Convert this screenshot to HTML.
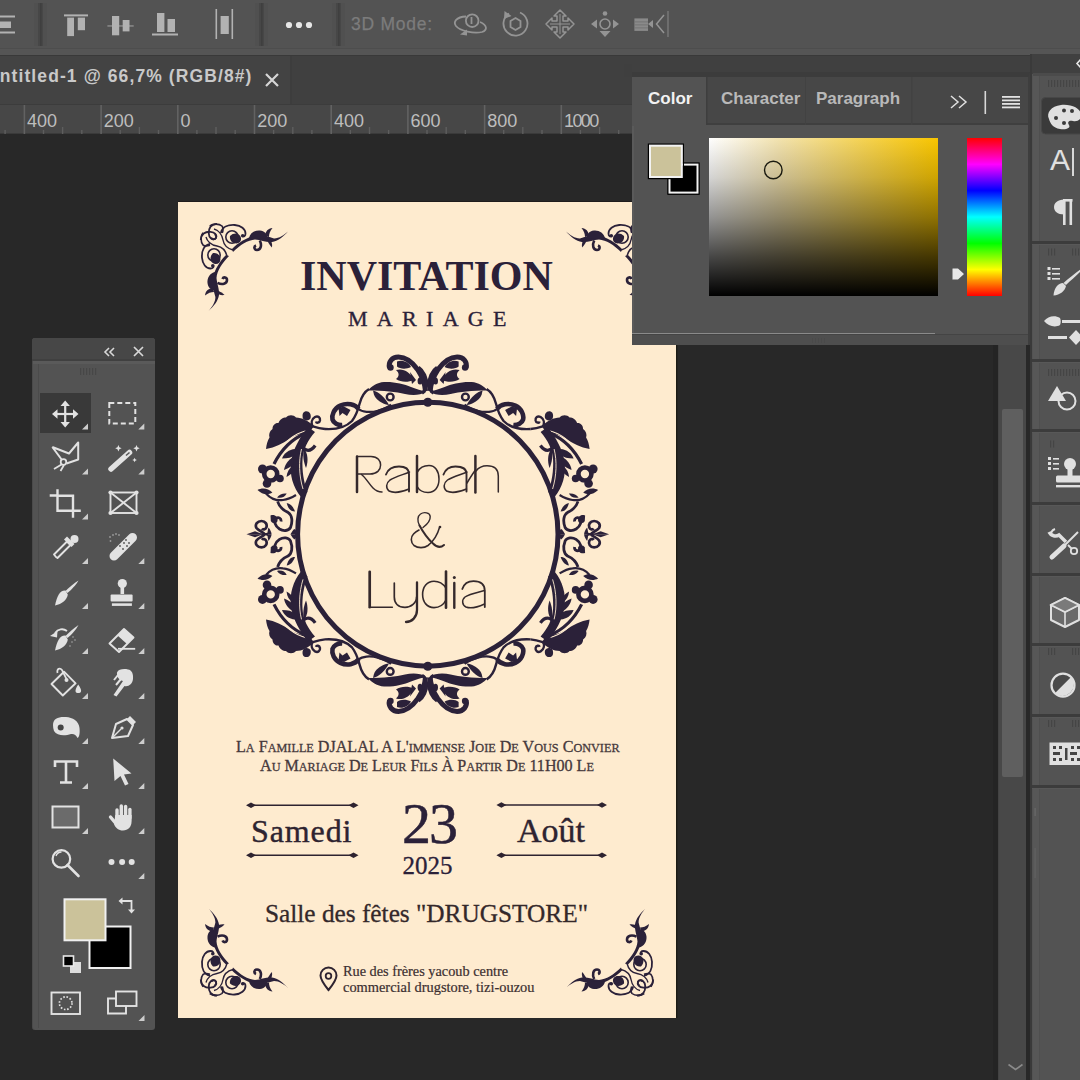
<!DOCTYPE html>
<html><head><meta charset="utf-8">
<style>
*{margin:0;padding:0;box-sizing:border-box}
html,body{width:1080px;height:1080px;overflow:hidden;background:#282828;font-family:"Liberation Sans",sans-serif}
.a{position:absolute}
svg{position:absolute;overflow:visible}
#top{left:0;top:0;width:1080px;height:48px;background:#535353}
#tl1{left:0;top:48px;width:1080px;height:1px;background:#4d4d4d}
#tl2{left:0;top:49px;width:1080px;height:6px;background:#555555}
#tl3{left:0;top:55px;width:1080px;height:1px;background:#393939}
#tabs{left:0;top:56px;width:1080px;height:48px;background:#404040}
#tab1{left:0;top:56px;width:292px;height:48px;background:#434343;border-right:2px solid #3d3d3d}
#tabtxt{left:-14px;top:66px;font-size:17.5px;font-weight:bold;color:#c9c9c9;white-space:nowrap;letter-spacing:1.1px}
#ruler{left:0;top:104px;width:1080px;height:30px;background:#474747;border-top:1px solid #3c3c3c;border-bottom:1px solid #3a3a3a}
.rn{position:absolute;top:110.5px;font-size:18px;color:#bdbdbd;white-space:nowrap}
.rt{position:absolute;top:105px;width:1px;height:29px;background:#6a6a6a}
#card{left:178px;top:202px;width:498px;height:816px;background:#feebcf;box-shadow:0 -1px 0 #1f1c1c,1px 0 0 #1c1b14,2px 0 0 #232320}
#canvasline{left:993px;top:134px;width:5px;height:946px;background:#242424}
#scroll{left:998px;top:345px;width:28px;height:735px;background:#484848;border-left:1px solid #424242}
#thumb{left:1002px;top:409px;width:21px;height:368px;background:#5f5f5f;border-radius:2px}
#dock{left:1030px;top:54px;width:50px;height:1026px;background:#535353;border-left:2px solid #3a3a3a}
#dockh{left:1032px;top:54px;width:48px;height:20px;background:#404040}
.dsep{position:absolute;left:1032px;width:48px;height:2px;background:#434343}
#tools{left:32px;top:338px;width:123px;height:692px;background:#535353;border-radius:3px;border-left:1px solid #4a4a4a}
#toolsh{left:32px;top:338px;width:123px;height:23px;background:#474747;border-radius:3px 3px 0 0;border-bottom:2px solid #404040}
#color{left:632px;top:72px;width:398px;height:273px;background:#535353;border-top:5px solid #3c3c3c;border-right:2px solid #3e3e3e}
#ctabs{left:632px;top:77px;width:396px;height:48px;background:#474747;border-bottom:2px solid #3f3f3f}
#ctab1{left:632px;top:77px;width:74px;height:49px;background:#535353}
.ctt{position:absolute;top:89px;font-size:17px;font-weight:bold;white-space:nowrap}
#field{left:709px;top:138px;width:229px;height:158px;background:linear-gradient(to bottom,rgba(0,0,0,0) 0%,rgba(0,0,0,0.17) 25%,rgba(0,0,0,0.42) 50%,rgba(0,0,0,0.72) 75%,#000 100%),linear-gradient(to right,#fff 0%,#f3e3b0 30%,#f8c500 100%)}
#hue{left:967px;top:138px;width:35px;height:158px;background:linear-gradient(to bottom,#f00 0%,#f0f 16.7%,#00f 33.3%,#0ff 50%,#0f0 66.7%,#ff0 83.3%,#f00 100%)}
#cbot1{left:632px;top:333px;width:303px;height:1px;background:#8a8a8a}
#cbot2{left:632px;top:334px;width:396px;height:11px;background:#4e4e4e;border-top:1px solid #444}
</style></head><body>
<div class="a" id="top"></div>



<!--TB--><svg style="left:0;top:0" width="1080" height="50"><rect x="0" y="15.5" width="15" height="2" fill="#b2b2b2"/><rect x="0" y="31.5" width="15" height="2" fill="#b2b2b2"/><rect x="0" y="21.5" width="11" height="6.5" fill="#b2b2b2"/><rect x="34" y="3" width="13" height="43" fill="#505050"/><rect x="38" y="3" width="5" height="43" fill="#474747"/><rect x="40" y="3" width="1.5" height="43" fill="#3f3f3f"/><rect x="255" y="3" width="13" height="43" fill="#505050"/><rect x="259" y="3" width="5" height="43" fill="#474747"/><rect x="261" y="3" width="1.5" height="43" fill="#3f3f3f"/><rect x="332" y="3" width="13" height="43" fill="#505050"/><rect x="336" y="3" width="5" height="43" fill="#474747"/><rect x="338" y="3" width="1.5" height="43" fill="#3f3f3f"/><rect x="64" y="14.4" width="24" height="2" fill="#b2b2b2"/><rect x="67.2" y="17.6" width="6.8" height="18.5" fill="#b2b2b2"/><rect x="77.8" y="17.6" width="7.2" height="12.6" fill="#b2b2b2"/><rect x="107.4" y="25.2" width="26.3" height="1.5" fill="#8a8a8a"/><rect x="112" y="16" width="7.2" height="19.3" fill="#b2b2b2"/><rect x="122.7" y="20" width="6.8" height="11.4" fill="#b2b2b2"/><rect x="157" y="13" width="7.4" height="19" fill="#b2b2b2"/><rect x="167.5" y="19" width="7.5" height="13" fill="#b2b2b2"/><rect x="152" y="33.5" width="26" height="2" fill="#b2b2b2"/><rect x="215.5" y="9" width="1.6" height="30" fill="#b2b2b2"/><rect x="231.5" y="9" width="1.6" height="30" fill="#b2b2b2"/><rect x="220.6" y="16" width="8.2" height="18" fill="#b2b2b2"/><circle cx="289" cy="25" r="3.1" fill="#e6e6e6"/><circle cx="299" cy="25" r="3.1" fill="#e6e6e6"/><circle cx="309" cy="25" r="3.1" fill="#e6e6e6"/><g fill="none" stroke="#949494" stroke-width="1.8"><circle cx="472.2" cy="20.7" r="6.3"/><path d="M466 16.5 C456 17 453 22 456 26 C460 31 474 34 482 32 C488 30 487 25 480 22"/><line x1="471.5" y1="17" x2="471.5" y2="24"/></g><path d="M460 34.5 L467 29.5 L467 35.5 Z" fill="#949494"/><g fill="none" stroke="#949494" stroke-width="1.8"><path d="M509 13.5 A12 12 0 1 0 520 12.5"/><polygon points="515.5,18 520.5,21 520.5,27 515.5,30 510.5,27 510.5,21"/></g><path d="M504.5 11 L511.5 16 L504 19 Z" fill="#949494"/><g fill="none" stroke="#949494" stroke-width="1.5" stroke-linejoin="round"><path d="M560 10 L566 16 L563 16 L563 21 L568 21 L568 18 L574 24 L568 30 L568 27 L563 27 L563 32 L566 32 L560 38 L554 32 L557 32 L557 27 L552 27 L552 30 L546 24 L552 18 L552 21 L557 21 L557 16 L554 16 Z"/></g><line x1="560" y1="14" x2="560" y2="34" stroke="#949494" stroke-width="1"/><line x1="550" y1="24" x2="570" y2="24" stroke="#949494" stroke-width="1"/><g fill="none" stroke="#949494" stroke-width="1.6"><circle cx="605" cy="24" r="5"/></g><circle cx="605" cy="13.5" r="2.3" fill="#949494"/><path d="M591 24 L597 19.5 L597 28.5 Z M619 24 L613 19.5 L613 28.5 Z M599.5 31 L610.5 31 L605 37 Z" fill="#949494"/><rect x="634.4" y="18.4" width="13.6" height="12.5" fill="#949494" opacity="0.85"/><g fill="#6e6e6e"><rect x="634.4" y="21.5" width="13.6" height="0.8"/><rect x="634.4" y="24.5" width="13.6" height="0.8"/><rect x="634.4" y="27.5" width="13.6" height="0.8"/></g><path d="M648 24 L653 20 L653 28 Z" fill="#949494"/><path d="M664 15 L656.5 24 L664 33" fill="none" stroke="#949494" stroke-width="1.5"/><line x1="668" y1="11" x2="668" y2="37" stroke="#808080" stroke-width="1.2"/></svg><div class="a" style="left:351px;top:14px;font-size:17.5px;color:#7c7c7c;white-space:nowrap;letter-spacing:0.75px;-webkit-text-stroke:0.25px #7c7c7c">3D Mode:</div><!--/TB-->
<div class="a" id="tl1"></div><div class="a" id="tl2"></div><div class="a" id="tl3"></div>
<div class="a" id="tabs"></div><div class="a" id="tab1"></div>
<div class="a" id="tabtxt">Untitled-1 @ 66,7% (RGB/8#)</div>
<div class="a" id="ruler"></div>


<!--RU--><svg style="left:0;top:104px" width="632" height="31"><rect x="-53.1" y="1" width="1.6" height="29" fill="#626262"/><rect x="-33.9" y="26" width="1.4" height="4" fill="#5e5e5e"/><rect x="-14.8" y="23" width="1.4" height="7" fill="#5e5e5e"/><rect x="4.4" y="26" width="1.4" height="4" fill="#5e5e5e"/><rect x="23.6" y="1" width="1.6" height="29" fill="#626262"/><rect x="42.8" y="26" width="1.4" height="4" fill="#5e5e5e"/><rect x="61.9" y="23" width="1.4" height="7" fill="#5e5e5e"/><rect x="81.1" y="26" width="1.4" height="4" fill="#5e5e5e"/><rect x="100.3" y="1" width="1.6" height="29" fill="#626262"/><rect x="119.5" y="26" width="1.4" height="4" fill="#5e5e5e"/><rect x="138.7" y="23" width="1.4" height="7" fill="#5e5e5e"/><rect x="157.8" y="26" width="1.4" height="4" fill="#5e5e5e"/><rect x="177.0" y="1" width="1.6" height="29" fill="#626262"/><rect x="196.2" y="26" width="1.4" height="4" fill="#5e5e5e"/><rect x="215.3" y="23" width="1.4" height="7" fill="#5e5e5e"/><rect x="234.5" y="26" width="1.4" height="4" fill="#5e5e5e"/><rect x="253.7" y="1" width="1.6" height="29" fill="#626262"/><rect x="272.9" y="26" width="1.4" height="4" fill="#5e5e5e"/><rect x="292.1" y="23" width="1.4" height="7" fill="#5e5e5e"/><rect x="311.2" y="26" width="1.4" height="4" fill="#5e5e5e"/><rect x="330.4" y="1" width="1.6" height="29" fill="#626262"/><rect x="349.6" y="26" width="1.4" height="4" fill="#5e5e5e"/><rect x="368.8" y="23" width="1.4" height="7" fill="#5e5e5e"/><rect x="387.9" y="26" width="1.4" height="4" fill="#5e5e5e"/><rect x="407.1" y="1" width="1.6" height="29" fill="#626262"/><rect x="426.3" y="26" width="1.4" height="4" fill="#5e5e5e"/><rect x="445.5" y="23" width="1.4" height="7" fill="#5e5e5e"/><rect x="464.6" y="26" width="1.4" height="4" fill="#5e5e5e"/><rect x="483.8" y="1" width="1.6" height="29" fill="#626262"/><rect x="503.0" y="26" width="1.4" height="4" fill="#5e5e5e"/><rect x="522.1" y="23" width="1.4" height="7" fill="#5e5e5e"/><rect x="541.3" y="26" width="1.4" height="4" fill="#5e5e5e"/><rect x="560.5" y="1" width="1.6" height="29" fill="#626262"/><rect x="579.7" y="26" width="1.4" height="4" fill="#5e5e5e"/><rect x="598.9" y="23" width="1.4" height="7" fill="#5e5e5e"/><rect x="618.0" y="26" width="1.4" height="4" fill="#5e5e5e"/><rect x="637.2" y="1" width="1.6" height="29" fill="#626262"/><rect x="656.4" y="26" width="1.4" height="4" fill="#5e5e5e"/><rect x="675.6" y="23" width="1.4" height="7" fill="#5e5e5e"/><rect x="694.7" y="26" width="1.4" height="4" fill="#5e5e5e"/></svg><div class="rn" style="left:27.1px">400</div><div class="rn" style="left:103.8px">200</div><div class="rn" style="left:180.5px">0</div><div class="rn" style="left:257.2px">200</div><div class="rn" style="left:333.9px">400</div><div class="rn" style="left:410.6px">600</div><div class="rn" style="left:487.3px">800</div><div class="rn" style="left:564.0px;letter-spacing:-1.6px">1000</div><div class="a" id="tabx" style="left:264px;top:72px;width:16px;height:16px"><svg width="16" height="16" style="left:0;top:0"><path d="M2 2 L14 14 M14 2 L2 14" stroke="#d6d6d6" stroke-width="2.2"/></svg></div><!--/RU-->
<div class="a" id="card"></div>


<!--CORN--><svg style="left:0;top:0" width="1080" height="1080"><g transform=""><g>
<path d="M232 249 C238 243 246 238 255 235.6 C262 234.5 268 237 274 238.4 C279 238.5 284 235 288 231.5 C283 237 278 241 272 242 C266 242.5 261 240 255 239.5 C248 240 240 245 233 252 Z" fill="#2b2139"/>
<path d="M249 238 C250 233 255 230 260 230.5 C265 231 268 235 267 239 C262 238 256 238 249 238 Z" fill="#2b2139"/>
<path d="M259.8 240.5 C262 245 261 250 257 250 C254 250 253.5 246.5 256 245.5" fill="none" stroke="#2b2139" stroke-width="2.6"/>
<path d="M265 236 C265.5 231 268 228.5 272.5 228 C270 231 269 234 269 237 Z" fill="#2b2139"/>
<path d="M267 240 C268.5 243 270 245.5 272 247.5 C272.5 244 271.5 241.5 270.5 239.5 Z" fill="#2b2139"/>
<path d="M220.9 233 C222 227 228 224.6 234.8 225 C241 225.5 245.5 229 245.5 233.5 C245.5 236 244 237 242.5 236" fill="none" stroke="#2b2139" stroke-width="1.8"/>
<circle cx="242.7" cy="235.8" r="1.8" fill="#2b2139"/>
<circle cx="232" cy="237" r="6.2" fill="none" stroke="#2b2139" stroke-width="1.6"/>
<path d="M230 236 C234 232 240 233 241 238 C241.5 242 238 244.5 234 243 C231 242 229.5 239 230 236 Z" fill="#2b2139"/>
<path d="M200.8 240 C201 234 205 231.5 210.5 231.8 C215 232 217 235 216 238 C214.5 240 211.5 239.5 211.5 237.5" fill="none" stroke="#2b2139" stroke-width="1.8"/>
<path d="M209.8 226 C213 223.5 219 223.5 222 226 C223.5 228 223 231 222.3 233" fill="none" stroke="#2b2139" stroke-width="1.6"/>
<path d="M214 229 C218 230 222 234 223 240 C224 246 229 249 233 250" fill="none" stroke="#2b2139" stroke-width="1.4"/>
</g><g transform="matrix(0,1,1,0,-23,23)">
<path d="M232 249 C238 243 246 238 255 235.6 C262 234.5 268 237 274 238.4 C279 238.5 284 235 288 231.5 C283 237 278 241 272 242 C266 242.5 261 240 255 239.5 C248 240 240 245 233 252 Z" fill="#2b2139"/>
<path d="M249 238 C250 233 255 230 260 230.5 C265 231 268 235 267 239 C262 238 256 238 249 238 Z" fill="#2b2139"/>
<path d="M259.8 240.5 C262 245 261 250 257 250 C254 250 253.5 246.5 256 245.5" fill="none" stroke="#2b2139" stroke-width="2.6"/>
<path d="M265 236 C265.5 231 268 228.5 272.5 228 C270 231 269 234 269 237 Z" fill="#2b2139"/>
<path d="M267 240 C268.5 243 270 245.5 272 247.5 C272.5 244 271.5 241.5 270.5 239.5 Z" fill="#2b2139"/>
<path d="M220.9 233 C222 227 228 224.6 234.8 225 C241 225.5 245.5 229 245.5 233.5 C245.5 236 244 237 242.5 236" fill="none" stroke="#2b2139" stroke-width="1.8"/>
<circle cx="242.7" cy="235.8" r="1.8" fill="#2b2139"/>
<circle cx="232" cy="237" r="6.2" fill="none" stroke="#2b2139" stroke-width="1.6"/>
<path d="M230 236 C234 232 240 233 241 238 C241.5 242 238 244.5 234 243 C231 242 229.5 239 230 236 Z" fill="#2b2139"/>
<path d="M200.8 240 C201 234 205 231.5 210.5 231.8 C215 232 217 235 216 238 C214.5 240 211.5 239.5 211.5 237.5" fill="none" stroke="#2b2139" stroke-width="1.8"/>
<path d="M209.8 226 C213 223.5 219 223.5 222 226 C223.5 228 223 231 222.3 233" fill="none" stroke="#2b2139" stroke-width="1.6"/>
<path d="M214 229 C218 230 222 234 223 240 C224 246 229 249 233 250" fill="none" stroke="#2b2139" stroke-width="1.4"/>
</g></g><g transform="translate(854,0) scale(-1,1)"><g>
<path d="M232 249 C238 243 246 238 255 235.6 C262 234.5 268 237 274 238.4 C279 238.5 284 235 288 231.5 C283 237 278 241 272 242 C266 242.5 261 240 255 239.5 C248 240 240 245 233 252 Z" fill="#2b2139"/>
<path d="M249 238 C250 233 255 230 260 230.5 C265 231 268 235 267 239 C262 238 256 238 249 238 Z" fill="#2b2139"/>
<path d="M259.8 240.5 C262 245 261 250 257 250 C254 250 253.5 246.5 256 245.5" fill="none" stroke="#2b2139" stroke-width="2.6"/>
<path d="M265 236 C265.5 231 268 228.5 272.5 228 C270 231 269 234 269 237 Z" fill="#2b2139"/>
<path d="M267 240 C268.5 243 270 245.5 272 247.5 C272.5 244 271.5 241.5 270.5 239.5 Z" fill="#2b2139"/>
<path d="M220.9 233 C222 227 228 224.6 234.8 225 C241 225.5 245.5 229 245.5 233.5 C245.5 236 244 237 242.5 236" fill="none" stroke="#2b2139" stroke-width="1.8"/>
<circle cx="242.7" cy="235.8" r="1.8" fill="#2b2139"/>
<circle cx="232" cy="237" r="6.2" fill="none" stroke="#2b2139" stroke-width="1.6"/>
<path d="M230 236 C234 232 240 233 241 238 C241.5 242 238 244.5 234 243 C231 242 229.5 239 230 236 Z" fill="#2b2139"/>
<path d="M200.8 240 C201 234 205 231.5 210.5 231.8 C215 232 217 235 216 238 C214.5 240 211.5 239.5 211.5 237.5" fill="none" stroke="#2b2139" stroke-width="1.8"/>
<path d="M209.8 226 C213 223.5 219 223.5 222 226 C223.5 228 223 231 222.3 233" fill="none" stroke="#2b2139" stroke-width="1.6"/>
<path d="M214 229 C218 230 222 234 223 240 C224 246 229 249 233 250" fill="none" stroke="#2b2139" stroke-width="1.4"/>
</g><g transform="matrix(0,1,1,0,-23,23)">
<path d="M232 249 C238 243 246 238 255 235.6 C262 234.5 268 237 274 238.4 C279 238.5 284 235 288 231.5 C283 237 278 241 272 242 C266 242.5 261 240 255 239.5 C248 240 240 245 233 252 Z" fill="#2b2139"/>
<path d="M249 238 C250 233 255 230 260 230.5 C265 231 268 235 267 239 C262 238 256 238 249 238 Z" fill="#2b2139"/>
<path d="M259.8 240.5 C262 245 261 250 257 250 C254 250 253.5 246.5 256 245.5" fill="none" stroke="#2b2139" stroke-width="2.6"/>
<path d="M265 236 C265.5 231 268 228.5 272.5 228 C270 231 269 234 269 237 Z" fill="#2b2139"/>
<path d="M267 240 C268.5 243 270 245.5 272 247.5 C272.5 244 271.5 241.5 270.5 239.5 Z" fill="#2b2139"/>
<path d="M220.9 233 C222 227 228 224.6 234.8 225 C241 225.5 245.5 229 245.5 233.5 C245.5 236 244 237 242.5 236" fill="none" stroke="#2b2139" stroke-width="1.8"/>
<circle cx="242.7" cy="235.8" r="1.8" fill="#2b2139"/>
<circle cx="232" cy="237" r="6.2" fill="none" stroke="#2b2139" stroke-width="1.6"/>
<path d="M230 236 C234 232 240 233 241 238 C241.5 242 238 244.5 234 243 C231 242 229.5 239 230 236 Z" fill="#2b2139"/>
<path d="M200.8 240 C201 234 205 231.5 210.5 231.8 C215 232 217 235 216 238 C214.5 240 211.5 239.5 211.5 237.5" fill="none" stroke="#2b2139" stroke-width="1.8"/>
<path d="M209.8 226 C213 223.5 219 223.5 222 226 C223.5 228 223 231 222.3 233" fill="none" stroke="#2b2139" stroke-width="1.6"/>
<path d="M214 229 C218 230 222 234 223 240 C224 246 229 249 233 250" fill="none" stroke="#2b2139" stroke-width="1.4"/>
</g></g><g transform="translate(0,1219.5) scale(1,-1)"><g>
<path d="M232 249 C238 243 246 238 255 235.6 C262 234.5 268 237 274 238.4 C279 238.5 284 235 288 231.5 C283 237 278 241 272 242 C266 242.5 261 240 255 239.5 C248 240 240 245 233 252 Z" fill="#2b2139"/>
<path d="M249 238 C250 233 255 230 260 230.5 C265 231 268 235 267 239 C262 238 256 238 249 238 Z" fill="#2b2139"/>
<path d="M259.8 240.5 C262 245 261 250 257 250 C254 250 253.5 246.5 256 245.5" fill="none" stroke="#2b2139" stroke-width="2.6"/>
<path d="M265 236 C265.5 231 268 228.5 272.5 228 C270 231 269 234 269 237 Z" fill="#2b2139"/>
<path d="M267 240 C268.5 243 270 245.5 272 247.5 C272.5 244 271.5 241.5 270.5 239.5 Z" fill="#2b2139"/>
<path d="M220.9 233 C222 227 228 224.6 234.8 225 C241 225.5 245.5 229 245.5 233.5 C245.5 236 244 237 242.5 236" fill="none" stroke="#2b2139" stroke-width="1.8"/>
<circle cx="242.7" cy="235.8" r="1.8" fill="#2b2139"/>
<circle cx="232" cy="237" r="6.2" fill="none" stroke="#2b2139" stroke-width="1.6"/>
<path d="M230 236 C234 232 240 233 241 238 C241.5 242 238 244.5 234 243 C231 242 229.5 239 230 236 Z" fill="#2b2139"/>
<path d="M200.8 240 C201 234 205 231.5 210.5 231.8 C215 232 217 235 216 238 C214.5 240 211.5 239.5 211.5 237.5" fill="none" stroke="#2b2139" stroke-width="1.8"/>
<path d="M209.8 226 C213 223.5 219 223.5 222 226 C223.5 228 223 231 222.3 233" fill="none" stroke="#2b2139" stroke-width="1.6"/>
<path d="M214 229 C218 230 222 234 223 240 C224 246 229 249 233 250" fill="none" stroke="#2b2139" stroke-width="1.4"/>
</g><g transform="matrix(0,1,1,0,-23,23)">
<path d="M232 249 C238 243 246 238 255 235.6 C262 234.5 268 237 274 238.4 C279 238.5 284 235 288 231.5 C283 237 278 241 272 242 C266 242.5 261 240 255 239.5 C248 240 240 245 233 252 Z" fill="#2b2139"/>
<path d="M249 238 C250 233 255 230 260 230.5 C265 231 268 235 267 239 C262 238 256 238 249 238 Z" fill="#2b2139"/>
<path d="M259.8 240.5 C262 245 261 250 257 250 C254 250 253.5 246.5 256 245.5" fill="none" stroke="#2b2139" stroke-width="2.6"/>
<path d="M265 236 C265.5 231 268 228.5 272.5 228 C270 231 269 234 269 237 Z" fill="#2b2139"/>
<path d="M267 240 C268.5 243 270 245.5 272 247.5 C272.5 244 271.5 241.5 270.5 239.5 Z" fill="#2b2139"/>
<path d="M220.9 233 C222 227 228 224.6 234.8 225 C241 225.5 245.5 229 245.5 233.5 C245.5 236 244 237 242.5 236" fill="none" stroke="#2b2139" stroke-width="1.8"/>
<circle cx="242.7" cy="235.8" r="1.8" fill="#2b2139"/>
<circle cx="232" cy="237" r="6.2" fill="none" stroke="#2b2139" stroke-width="1.6"/>
<path d="M230 236 C234 232 240 233 241 238 C241.5 242 238 244.5 234 243 C231 242 229.5 239 230 236 Z" fill="#2b2139"/>
<path d="M200.8 240 C201 234 205 231.5 210.5 231.8 C215 232 217 235 216 238 C214.5 240 211.5 239.5 211.5 237.5" fill="none" stroke="#2b2139" stroke-width="1.8"/>
<path d="M209.8 226 C213 223.5 219 223.5 222 226 C223.5 228 223 231 222.3 233" fill="none" stroke="#2b2139" stroke-width="1.6"/>
<path d="M214 229 C218 230 222 234 223 240 C224 246 229 249 233 250" fill="none" stroke="#2b2139" stroke-width="1.4"/>
</g></g><g transform="translate(854,1219.5) scale(-1,-1)"><g>
<path d="M232 249 C238 243 246 238 255 235.6 C262 234.5 268 237 274 238.4 C279 238.5 284 235 288 231.5 C283 237 278 241 272 242 C266 242.5 261 240 255 239.5 C248 240 240 245 233 252 Z" fill="#2b2139"/>
<path d="M249 238 C250 233 255 230 260 230.5 C265 231 268 235 267 239 C262 238 256 238 249 238 Z" fill="#2b2139"/>
<path d="M259.8 240.5 C262 245 261 250 257 250 C254 250 253.5 246.5 256 245.5" fill="none" stroke="#2b2139" stroke-width="2.6"/>
<path d="M265 236 C265.5 231 268 228.5 272.5 228 C270 231 269 234 269 237 Z" fill="#2b2139"/>
<path d="M267 240 C268.5 243 270 245.5 272 247.5 C272.5 244 271.5 241.5 270.5 239.5 Z" fill="#2b2139"/>
<path d="M220.9 233 C222 227 228 224.6 234.8 225 C241 225.5 245.5 229 245.5 233.5 C245.5 236 244 237 242.5 236" fill="none" stroke="#2b2139" stroke-width="1.8"/>
<circle cx="242.7" cy="235.8" r="1.8" fill="#2b2139"/>
<circle cx="232" cy="237" r="6.2" fill="none" stroke="#2b2139" stroke-width="1.6"/>
<path d="M230 236 C234 232 240 233 241 238 C241.5 242 238 244.5 234 243 C231 242 229.5 239 230 236 Z" fill="#2b2139"/>
<path d="M200.8 240 C201 234 205 231.5 210.5 231.8 C215 232 217 235 216 238 C214.5 240 211.5 239.5 211.5 237.5" fill="none" stroke="#2b2139" stroke-width="1.8"/>
<path d="M209.8 226 C213 223.5 219 223.5 222 226 C223.5 228 223 231 222.3 233" fill="none" stroke="#2b2139" stroke-width="1.6"/>
<path d="M214 229 C218 230 222 234 223 240 C224 246 229 249 233 250" fill="none" stroke="#2b2139" stroke-width="1.4"/>
</g><g transform="matrix(0,1,1,0,-23,23)">
<path d="M232 249 C238 243 246 238 255 235.6 C262 234.5 268 237 274 238.4 C279 238.5 284 235 288 231.5 C283 237 278 241 272 242 C266 242.5 261 240 255 239.5 C248 240 240 245 233 252 Z" fill="#2b2139"/>
<path d="M249 238 C250 233 255 230 260 230.5 C265 231 268 235 267 239 C262 238 256 238 249 238 Z" fill="#2b2139"/>
<path d="M259.8 240.5 C262 245 261 250 257 250 C254 250 253.5 246.5 256 245.5" fill="none" stroke="#2b2139" stroke-width="2.6"/>
<path d="M265 236 C265.5 231 268 228.5 272.5 228 C270 231 269 234 269 237 Z" fill="#2b2139"/>
<path d="M267 240 C268.5 243 270 245.5 272 247.5 C272.5 244 271.5 241.5 270.5 239.5 Z" fill="#2b2139"/>
<path d="M220.9 233 C222 227 228 224.6 234.8 225 C241 225.5 245.5 229 245.5 233.5 C245.5 236 244 237 242.5 236" fill="none" stroke="#2b2139" stroke-width="1.8"/>
<circle cx="242.7" cy="235.8" r="1.8" fill="#2b2139"/>
<circle cx="232" cy="237" r="6.2" fill="none" stroke="#2b2139" stroke-width="1.6"/>
<path d="M230 236 C234 232 240 233 241 238 C241.5 242 238 244.5 234 243 C231 242 229.5 239 230 236 Z" fill="#2b2139"/>
<path d="M200.8 240 C201 234 205 231.5 210.5 231.8 C215 232 217 235 216 238 C214.5 240 211.5 239.5 211.5 237.5" fill="none" stroke="#2b2139" stroke-width="1.8"/>
<path d="M209.8 226 C213 223.5 219 223.5 222 226 C223.5 228 223 231 222.3 233" fill="none" stroke="#2b2139" stroke-width="1.6"/>
<path d="M214 229 C218 230 222 234 223 240 C224 246 229 249 233 250" fill="none" stroke="#2b2139" stroke-width="1.4"/>
</g></g></svg><!--/CORN-->
<div class="a" id="canvasline"></div>
<div class="a" id="scroll"></div><div class="a" id="thumb"></div>
<div class="a" id="dock"></div><div class="a" id="dockh"></div>
<div class="a" id="tools"></div><div class="a" id="toolsh"></div>


<!--TOOLS--><svg style="left:0;top:0" width="160" height="1080"><!--inner-line--><rect x="38" y="363" width="1" height="665" fill="#4b4b4b"/><rect x="33" y="361" width="122" height="3" fill="#5a5a5a"/><g fill="#474747"><rect x="80" y="368" width="1.2" height="7"/><rect x="83" y="368" width="1.2" height="7"/><rect x="86" y="368" width="1.2" height="7"/><rect x="89" y="368" width="1.2" height="7"/><rect x="92" y="368" width="1.2" height="7"/><rect x="95" y="368" width="1.2" height="7"/></g><path d="M109 348 L105 352 L109 356 M114 348 L110 352 L114 356" fill="none" stroke="#d8d8d8" stroke-width="1.6"/><path d="M134 347 L143 356 M143 347 L134 356" fill="none" stroke="#d8d8d8" stroke-width="1.7"/><rect x="40" y="393" width="51" height="40" fill="#393939"/><g stroke="#e2e2e2" stroke-width="2.2" fill="none"><line x1="54" y1="414" x2="76.5" y2="414"/><line x1="65.2" y1="403" x2="65.2" y2="425.5"/></g><path d="M65.2 400.5 L60.5 406 L69.9 406 Z M65.2 427.5 L60.5 422 L69.9 422 Z M52 414 L57.5 409.3 L57.5 418.7 Z M78.5 414 L73 409.3 L73 418.7 Z" fill="#e2e2e2"/><path d="M88 429.5 L82 429.5 L88 423.5 Z" fill="#cdcdcd"/><rect x="109.3" y="403" width="26" height="20.5" fill="none" stroke="#e2e2e2" stroke-width="2" stroke-dasharray="5 3"/><path d="M144.3 429.5 L138.3 429.5 L144.3 423.5 Z" fill="#cdcdcd"/><path d="M52.3 447 L69 453.5 L78.2 442.5 L78.2 459.5 L66.5 463.5 M52.3 447 L62 460" fill="none" stroke="#e2e2e2" stroke-width="2" stroke-linejoin="round"/><circle cx="63.5" cy="462" r="2.8" fill="none" stroke="#e2e2e2" stroke-width="1.8"/><path d="M61.5 464.5 L54 469 M64 465 L60.5 471" stroke="#e2e2e2" stroke-width="1.8"/><path d="M88 474.5 L82 474.5 L88 468.5 Z" fill="#cdcdcd"/><line x1="111" y1="469" x2="129.5" y2="452.5" stroke="#e2e2e2" stroke-width="5.5" stroke-linecap="round"/><line x1="126" y1="455.5" x2="129.5" y2="452.5" stroke="#535353" stroke-width="1.5"/><path d="M118.4 445.1 L119.36 447.34000000000003 L121.60000000000001 448.3 L119.36 449.26 L118.4 451.5 L117.44000000000001 449.26 L115.2 448.3 L117.44000000000001 447.34000000000003 Z" fill="#e2e2e2"/><path d="M136.5 445.1 L137.46 447.34000000000003 L139.7 448.3 L137.46 449.26 L136.5 451.5 L135.54 449.26 L133.3 448.3 L135.54 447.34000000000003 Z" fill="#e2e2e2"/><path d="M134.6 457.7 L135.29 459.31 L136.9 460 L135.29 460.69 L134.6 462.3 L133.91 460.69 L132.29999999999998 460 L133.91 459.31 Z" fill="#e2e2e2"/><path d="M144.3 474.5 L138.3 474.5 L144.3 468.5 Z" fill="#cdcdcd"/><path d="M49.7 495.5 H57.5 M57.5 489.2 V510.8 H80.8 M58.7 495.7 H73 V517.7" fill="none" stroke="#e2e2e2" stroke-width="2.4"/><path d="M88 519.5 L82 519.5 L88 513.5 Z" fill="#cdcdcd"/><g stroke="#e2e2e2" stroke-width="1.9" fill="none"><rect x="110.5" y="492.5" width="26" height="20.5"/><line x1="110.5" y1="492.5" x2="136.5" y2="513"/><line x1="136.5" y1="492.5" x2="110.5" y2="513"/></g><circle cx="110.5" cy="492.5" r="2.1" fill="#e2e2e2"/><circle cx="136.5" cy="492.5" r="2.1" fill="#e2e2e2"/><circle cx="110.5" cy="513" r="2.1" fill="#e2e2e2"/><circle cx="136.5" cy="513" r="2.1" fill="#e2e2e2"/><path d="M56 557 L54 554.5 L67 541.5 L70.5 545 L57.5 558 Z" fill="none" stroke="#e2e2e2" stroke-width="1.9" stroke-linejoin="round"/><path d="M64 539.5 L71.5 547 L74.5 544 L67 536.5 Z" fill="#e2e2e2"/><circle cx="74.5" cy="539" r="4" fill="#e2e2e2"/><path d="M88 564 L82 564 L88 558 Z" fill="#cdcdcd"/><line x1="114" y1="556" x2="132.5" y2="537.5" stroke="#e2e2e2" stroke-width="9" stroke-linecap="round"/><circle cx="120" cy="546" r="0.9" fill="#535353"/><circle cx="123" cy="549" r="0.9" fill="#535353"/><circle cx="124" cy="543" r="0.9" fill="#535353"/><circle cx="127" cy="546" r="0.9" fill="#535353"/><circle cx="126" cy="540" r="0.9" fill="#535353"/><circle cx="129" cy="543" r="0.9" fill="#535353"/><g fill="#9a9a9a"><circle cx="110" cy="537" r="0.9"/><circle cx="113" cy="535" r="0.9"/><circle cx="116" cy="534" r="0.9"/><circle cx="110.5" cy="541" r="0.9"/><circle cx="119" cy="535" r="0.9"/></g><path d="M144.3 564 L138.3 564 L144.3 558 Z" fill="#cdcdcd"/><path d="M78.5 580.5 C76 585 71 590 67.5 593 L65.5 591 C69 587.5 74 583 78.5 580.5 Z" fill="#e2e2e2"/><path d="M65.5 590.5 C60 590 57 596 55 605.5 C62 604 67 600 67.8 594.5 Z" fill="#e2e2e2"/><path d="M88 609 L82 609 L88 603 Z" fill="#cdcdcd"/><circle cx="122.3" cy="583.5" r="4.6" fill="#e2e2e2"/><rect x="120.5" y="586" width="3.6" height="8" fill="#e2e2e2"/><rect x="110.6" y="594.5" width="22" height="7" rx="1" fill="#e2e2e2"/><rect x="111.9" y="603.3" width="20" height="2.6" fill="#e2e2e2"/><path d="M144.3 609 L138.3 609 L144.3 603 Z" fill="#cdcdcd"/><path d="M78.5 625 C76 630 71 635 67.5 638 L65.5 636 C69 632.5 74 628 78.5 625 Z" fill="#e2e2e2"/><path d="M65.5 635.5 C60 635 57 641 55 650.5 C62 649 67 645 67.8 639.5 Z" fill="#e2e2e2"/><path d="M67 631 C63 628 58 629 55 633" fill="none" stroke="#e2e2e2" stroke-width="1.8"/><path d="M50 636 L57.5 631 L57 637.5 Z" fill="#e2e2e2"/><g fill="#a8a8a8"><circle cx="73" cy="637" r="0.8"/><circle cx="75" cy="640" r="0.8"/><circle cx="72" cy="642" r="0.8"/><circle cx="70" cy="646" r="0.8"/></g><path d="M88 654 L82 654 L88 648 Z" fill="#cdcdcd"/><path d="M109.5 643.5 L124 629 L133.5 637.5 L119 652 Z" fill="none" stroke="#e2e2e2" stroke-width="1.9" stroke-linejoin="round"/><path d="M117.5 635.5 L124 629 L133.5 637.5 L127 644 Z" fill="#e2e2e2"/><line x1="118" y1="648.8" x2="135.2" y2="648.8" stroke="#e2e2e2" stroke-width="1.8"/><path d="M144.3 654 L138.3 654 L144.3 648 Z" fill="#cdcdcd"/><path d="M51.5 684 L64 671.7 L75.6 683.3 L62.8 695.5 Z" fill="none" stroke="#e2e2e2" stroke-width="1.9" stroke-linejoin="round"/><path d="M57.5 673 C56.5 668.5 60 667.5 62 670 L66.5 679" fill="none" stroke="#e2e2e2" stroke-width="1.7"/><circle cx="66.5" cy="680" r="2" fill="#e2e2e2"/><path d="M78.2 684.5 C80.5 688 81.5 690 81 691.5 C80.5 693.5 76 693.5 75.6 691.5 C75.3 690 76 688 78.2 684.5 Z" fill="#e2e2e2"/><path d="M88 699 L82 699 L88 693 Z" fill="#cdcdcd"/><path d="M113.5 695 L123 681 C119 680 116.5 676.5 117 672.5 C118.5 669 124 668.5 128 669.5 C132 670 133.5 674 133 679 C132.5 684 128.5 687 124.5 686 L116.5 696.5 Z" fill="#e2e2e2"/><path d="M118 675 L114 680 M121 679 L116 685" stroke="#e2e2e2" stroke-width="2"/><path d="M144.3 699 L138.3 699 L144.3 693 Z" fill="#cdcdcd"/><path d="M53 725 C53 718 59 716.5 66 717 C72.5 717.5 79 721 79.5 728 C80 733 79.5 737 77.5 738 C76 735 74 733.5 71 734 C65 736 57 736 54 731 C53.3 729 53 727 53 725 Z" fill="#e2e2e2"/><circle cx="60.7" cy="727.5" r="3" fill="#444"/><path d="M88 744 L82 744 L88 738 Z" fill="#cdcdcd"/><path d="M112 738 L116 724 L127 719 L133 725 L128 736 Z" fill="none" stroke="#e2e2e2" stroke-width="2" stroke-linejoin="round"/><path d="M127 719 L130 716 L136 722 L133 725 Z" fill="#e2e2e2"/><line x1="112.5" y1="737.5" x2="121" y2="729" stroke="#e2e2e2" stroke-width="1.5"/><circle cx="122" cy="728" r="1.6" fill="#e2e2e2"/><path d="M144.3 744 L138.3 744 L144.3 738 Z" fill="#cdcdcd"/><path d="M55 767 V761.5 H77 V767 M66 761.5 V782.5 M60 782.5 H72" fill="none" stroke="#e2e2e2" stroke-width="2.6"/><path d="M88 789 L82 789 L88 783 Z" fill="#cdcdcd"/><path d="M113.2 758.5 L131.5 773.5 L124 774.5 L128.5 784 L125 785.5 L120.5 776 L114.5 781 Z" fill="#e2e2e2"/><path d="M144.3 789 L138.3 789 L144.3 783 Z" fill="#cdcdcd"/><rect x="52.5" y="806.5" width="26" height="21" fill="#6b6b6b" stroke="#e2e2e2" stroke-width="2"/><path d="M88 834 L82 834 L88 828 Z" fill="#cdcdcd"/><g stroke="#e2e2e2" stroke-width="3.4" stroke-linecap="round"><line x1="117" y1="818" x2="117" y2="810"/><line x1="121.3" y1="817" x2="121.3" y2="806"/><line x1="125.6" y1="817" x2="125.6" y2="806.5"/><line x1="129.9" y1="818" x2="129.9" y2="809.5"/><line x1="110.5" y1="817" x2="115.5" y2="823"/></g><path d="M115.3 815 H131.6 V821 C131.6 827 128 830.5 123 830.5 C118.5 830.5 115.5 828 114 824 Z" fill="#e2e2e2"/><path d="M144.3 834 L138.3 834 L144.3 828 Z" fill="#cdcdcd"/><circle cx="61.4" cy="858.9" r="8.8" fill="none" stroke="#e2e2e2" stroke-width="2.2"/><line x1="67.5" y1="865" x2="78.5" y2="876" stroke="#e2e2e2" stroke-width="2.6" stroke-linecap="round"/><path d="M56 856 C57 853 59.5 852 61.5 852" fill="none" stroke="#e2e2e2" stroke-width="1.3"/><circle cx="111.5" cy="862" r="3" fill="#e2e2e2"/><circle cx="122.1" cy="862" r="3" fill="#e2e2e2"/><circle cx="131.7" cy="862" r="3" fill="#e2e2e2"/><path d="M144.3 879 L138.3 879 L144.3 873 Z" fill="#cdcdcd"/><rect x="89.5" y="926.5" width="41" height="41.5" fill="#000" stroke="#f0f0f0" stroke-width="2"/><rect x="64.5" y="899.3" width="41" height="41" fill="#cbc29a" stroke="#f0f0f0" stroke-width="2"/><path d="M121 901 H131.5 V910" fill="none" stroke="#e2e2e2" stroke-width="1.8"/><path d="M118.5 901 L122.5 897.5 V904.5 Z M131.5 913.5 L128 909.5 H135 Z" fill="#e2e2e2"/><rect x="70" y="962" width="11" height="11" fill="#dcdcdc"/><rect x="63.5" y="956" width="10" height="10" fill="#000" stroke="#e8e8e8" stroke-width="1.6"/><rect x="51.5" y="992.5" width="28.5" height="21.5" fill="none" stroke="#e2e2e2" stroke-width="1.9"/><circle cx="65.7" cy="1003.2" r="6.3" fill="none" stroke="#e2e2e2" stroke-width="1.7" stroke-dasharray="1.6 1.7"/><rect x="116" y="991.5" width="20.5" height="14.5" fill="none" stroke="#e2e2e2" stroke-width="1.9"/><path d="M116 998.5 H108 V1013.5 H126 V1006" fill="none" stroke="#e2e2e2" stroke-width="1.9"/><path d="M144.5 1021 L138.5 1021 L144.5 1015 Z" fill="#cdcdcd"/></svg><!--/TOOLS-->
<div class="a" id="color"></div>
<div class="a" id="ctabs"></div><div class="a" id="ctab1"></div>
<div class="ctt" style="left:648px;color:#f2f2f2">Color</div>
<div class="ctt" style="left:721px;color:#b9b9b9">Character</div>
<div class="ctt" style="left:816px;color:#b9b9b9">Paragraph</div>
<div class="a" id="field"></div>
<div class="a" id="hue"></div>
<div class="a" id="cbot2"></div><div class="a" id="cbot1"></div>

<style>
.sm{font-size:76%}
.cs{position:absolute;font-family:"Liberation Serif",serif;white-space:nowrap;line-height:1}
</style>
<div class="cs" id="inv" style="left:300px;top:255px;font-size:42px;font-weight:bold;color:#2b2139">INVITATION</div>
<div class="cs" id="mar" style="left:348px;top:308px;font-size:22px;letter-spacing:9.3px;color:#2b2139;-webkit-text-stroke:0.35px #2b2139">MARIAGE</div>
<div class="cs" id="fam1" style="left:236px;top:739px;font-size:16.1px;color:#46393c;-webkit-text-stroke:0.3px #46393c">L<span class="sm">A</span> F<span class="sm">AMILLE</span> DJALAL A L'<span class="sm">IMMENSE</span> J<span class="sm">OIE</span> D<span class="sm">E</span> V<span class="sm">OUS</span> C<span class="sm">ONVIER</span></div>
<div class="cs" id="fam2" style="left:260px;top:757.5px;font-size:16.1px;color:#46393c;-webkit-text-stroke:0.3px #46393c">A<span class="sm">U</span> M<span class="sm">ARIAGE</span> D<span class="sm">E</span> L<span class="sm">EUR</span> F<span class="sm">ILS</span> À P<span class="sm">ARTIR</span> D<span class="sm">E</span> 11H00 L<span class="sm">E</span></div>
<div class="cs" id="sam" style="left:251px;top:815px;font-size:32px;letter-spacing:0.9px;-webkit-text-stroke:0.4px #2e2330;color:#2e2330">Samedi</div>
<div class="cs" id="d23" style="left:402px;top:795px;font-size:58px;letter-spacing:-2px;-webkit-text-stroke:0.5px #2b2139;color:#2b2139">23</div>
<div class="cs" id="y25" style="left:402.5px;top:852.5px;font-size:25px;-webkit-text-stroke:0.3px #2b2139;color:#2b2139">2025</div>
<div class="cs" id="aout" style="left:517px;top:814px;font-size:34px;letter-spacing:0px;-webkit-text-stroke:0.4px #2e2330;color:#2e2330">Août</div>
<div class="cs" id="salle" style="left:265px;top:901px;font-size:25.3px;-webkit-text-stroke:0.3px #34282a;color:#34282a">Salle des fêtes "DRUGSTORE"</div>
<div class="cs" id="adr1" style="left:343px;top:964px;font-size:14.3px;-webkit-text-stroke:0.2px #3b2e30;color:#3b2e30">Rue des frères yacoub centre</div>
<div class="cs" id="adr2" style="left:343px;top:980px;font-size:14.4px;-webkit-text-stroke:0.2px #3b2e30;color:#3b2e30">commercial drugstore, tizi-ouzou</div>
<svg style="left:0;top:0" width="1080" height="1080"><path d="M246 805.2 L251 802.4000000000001 L256 805.2 L251 808.0Z M358.5 805.2 L353.5 802.4000000000001 L348.5 805.2 L353.5 808.0Z" fill="#2e2330"/><line x1="251" y1="805.2" x2="353.5" y2="805.2" stroke="#2e2330" stroke-width="1.6"/><path d="M246 855.2 L251 852.4000000000001 L256 855.2 L251 858.0Z M358.5 855.2 L353.5 852.4000000000001 L348.5 855.2 L353.5 858.0Z" fill="#2e2330"/><line x1="251" y1="855.2" x2="353.5" y2="855.2" stroke="#2e2330" stroke-width="1.6"/><path d="M496.4 805 L501.4 802.2 L506.4 805 L501.4 807.8Z M607 805 L602 802.2 L597 805 L602 807.8Z" fill="#2e2330"/><line x1="501.4" y1="805" x2="602" y2="805" stroke="#2e2330" stroke-width="1.6"/><path d="M496.4 855.2 L501.4 852.4000000000001 L506.4 855.2 L501.4 858.0Z M607 855.2 L602 852.4000000000001 L597 855.2 L602 858.0Z" fill="#2e2330"/><line x1="501.4" y1="855.2" x2="602" y2="855.2" stroke="#2e2330" stroke-width="1.6"/><path d="M328.5 990 C322 982 320.5 979 320.5 975.5 A8 8 0 0 1 336.5 975.5 C336.5 979 335 982 328.5 990Z" fill="none" stroke="#2e2330" stroke-width="2"/><circle cx="328.5" cy="976" r="2.8" fill="none" stroke="#2e2330" stroke-width="1.8"/></svg>









<!--PAN--><svg style="left:0;top:0" width="1080" height="1080"><!--cp-left-edge--><rect x="632" y="126" width="2" height="207" fill="#5a5a5a"/><rect x="624" y="64" width="8" height="13" fill="#3d3d3d" opacity="0.5"/><rect x="667.8" y="162.9" width="31.4" height="31.4" fill="#000" stroke="#000" stroke-width="1"/><rect x="669.5" y="164.6" width="28" height="28" fill="#000" stroke="#f2f2f2" stroke-width="2"/><rect x="648.4" y="144.1" width="35" height="34.5" fill="none" stroke="#000" stroke-width="1.2"/><rect x="650" y="145.7" width="31.8" height="31.3" fill="#cbc29a" stroke="#f2f2f2" stroke-width="2"/><circle cx="773.3" cy="170" r="8.8" fill="none" stroke="#1a1a10" stroke-width="1.4"/><path d="M952.5 269 Q952 268.5 953 268.5 H958 L964 274 L958 279.5 H953 Q952 279.5 952.5 279 Z" fill="#e8e8e8"/><path d="M951 96 L958 102 L951 108 M959 96 L966 102 L959 108" fill="none" stroke="#e0e0e0" stroke-width="1.5"/><rect x="984.5" y="91" width="1.6" height="23" fill="#d8d8d8"/><rect x="1002" y="96" width="18" height="1.8" fill="#e2e2e2"/><rect x="1002" y="99.5" width="18" height="1.8" fill="#e2e2e2"/><rect x="1002" y="103" width="18" height="1.8" fill="#e2e2e2"/><rect x="1002" y="106.5" width="18" height="1.8" fill="#e2e2e2"/><rect x="706" y="77" width="1.5" height="48" fill="#3e3e3e"/><rect x="805" y="77" width="1" height="48" fill="#424242"/><rect x="911" y="77" width="1.5" height="48" fill="#424242"/><g fill="#4a4a4a"><rect x="812" y="338" width="1" height="5"/><rect x="815" y="338" width="1" height="5"/><rect x="818" y="338" width="1" height="5"/><rect x="821" y="338" width="1" height="5"/><rect x="824" y="338" width="1" height="5"/></g><!--dock-strip--><rect x="1033" y="76" width="6" height="1004" fill="#575757"/><rect x="1039" y="76" width="1" height="1004" fill="#4f4f4f"/><rect x="1034.5" y="808" width="1.2" height="8" fill="#6a6a6a"/><rect x="1034.5" y="848" width="1.2" height="30" fill="#626262"/><path d="M1081 59 L1077 63.5 L1081 68" fill="none" stroke="#e8e8e8" stroke-width="1.6"/><rect x="1033" y="73" width="47" height="3" fill="#4b4b4b"/><rect x="1048" y="80" width="1.2" height="7" fill="#454545"/><rect x="1051" y="80" width="1.2" height="7" fill="#454545"/><rect x="1054" y="80" width="1.2" height="7" fill="#454545"/><rect x="1057" y="80" width="1.2" height="7" fill="#454545"/><rect x="1060" y="80" width="1.2" height="7" fill="#454545"/><rect x="1063" y="80" width="1.2" height="7" fill="#454545"/><rect x="1066" y="80" width="1.2" height="7" fill="#454545"/><rect x="1069" y="80" width="1.2" height="7" fill="#454545"/><rect x="1072" y="80" width="1.2" height="7" fill="#454545"/><rect x="1075" y="80" width="1.2" height="7" fill="#454545"/><rect x="1078" y="80" width="1.2" height="7" fill="#454545"/><rect x="1041.5" y="97.5" width="45" height="36.5" rx="4" fill="#3a3a3a" stroke="#474747" stroke-width="1"/><path d="M1049 119 C1046 113 1051 106 1061 105 C1071 104 1080 108 1081 114 C1082 119 1078 122 1073 121 C1069 120 1067 122 1069 125 C1071 128 1066 130 1060 129 C1053 128 1050 123 1049 119 Z" fill="#e0e0e0"/><circle cx="1056" cy="118" r="2" fill="#3a3a3a"/><circle cx="1064" cy="110.5" r="2" fill="#3a3a3a"/><circle cx="1072" cy="111" r="2" fill="#3a3a3a"/><circle cx="1064" cy="123" r="2" fill="#3a3a3a"/><path d="M1064.5 199.5 C1057 199.5 1054 203.5 1054 207 C1054 211 1057 214.5 1064.5 214.5 Z" fill="#e0e0e0"/><rect x="1063" y="199" width="9.5" height="2.6" fill="#e0e0e0"/><rect x="1063" y="199" width="2.6" height="26" fill="#e0e0e0"/><rect x="1069.5" y="199" width="2.6" height="26" fill="#e0e0e0"/><rect x="1032" y="241" width="48" height="3" fill="#3c3c3c"/><rect x="1032" y="244" width="48" height="1" fill="#585858"/><rect x="1032" y="359" width="48" height="3" fill="#3c3c3c"/><rect x="1032" y="362" width="48" height="1" fill="#585858"/><rect x="1032" y="429" width="48" height="3" fill="#3c3c3c"/><rect x="1032" y="432" width="48" height="1" fill="#585858"/><rect x="1032" y="502" width="48" height="3" fill="#3c3c3c"/><rect x="1032" y="505" width="48" height="1" fill="#585858"/><rect x="1032" y="573" width="48" height="3" fill="#3c3c3c"/><rect x="1032" y="576" width="48" height="1" fill="#585858"/><rect x="1032" y="643" width="48" height="3" fill="#3c3c3c"/><rect x="1032" y="646" width="48" height="1" fill="#585858"/><rect x="1032" y="714" width="48" height="3" fill="#3c3c3c"/><rect x="1032" y="717" width="48" height="1" fill="#585858"/><rect x="1032" y="785" width="48" height="3" fill="#3c3c3c"/><rect x="1032" y="788" width="48" height="1" fill="#585858"/><rect x="1048" y="248.5" width="1.2" height="7" fill="#454545"/><rect x="1051" y="248.5" width="1.2" height="7" fill="#454545"/><rect x="1054" y="248.5" width="1.2" height="7" fill="#454545"/><rect x="1072" y="248.5" width="1.2" height="7" fill="#454545"/><rect x="1075" y="248.5" width="1.2" height="7" fill="#454545"/><rect x="1078" y="248.5" width="1.2" height="7" fill="#454545"/><rect x="1048" y="369" width="1.2" height="7" fill="#454545"/><rect x="1051" y="369" width="1.2" height="7" fill="#454545"/><rect x="1054" y="369" width="1.2" height="7" fill="#454545"/><rect x="1057" y="369" width="1.2" height="7" fill="#454545"/><rect x="1060" y="369" width="1.2" height="7" fill="#454545"/><rect x="1063" y="369" width="1.2" height="7" fill="#454545"/><rect x="1066" y="369" width="1.2" height="7" fill="#454545"/><rect x="1069" y="369" width="1.2" height="7" fill="#454545"/><rect x="1072" y="369" width="1.2" height="7" fill="#454545"/><rect x="1075" y="369" width="1.2" height="7" fill="#454545"/><rect x="1078" y="369" width="1.2" height="7" fill="#454545"/><rect x="1050" y="440.5" width="1.2" height="7" fill="#454545"/><rect x="1053" y="440.5" width="1.2" height="7" fill="#454545"/><rect x="1048" y="648" width="1.2" height="7" fill="#454545"/><rect x="1051" y="648" width="1.2" height="7" fill="#454545"/><rect x="1054" y="648" width="1.2" height="7" fill="#454545"/><rect x="1072" y="648" width="1.2" height="7" fill="#454545"/><rect x="1075" y="648" width="1.2" height="7" fill="#454545"/><rect x="1078" y="648" width="1.2" height="7" fill="#454545"/><rect x="1048" y="720" width="1.2" height="7" fill="#454545"/><rect x="1051" y="720" width="1.2" height="7" fill="#454545"/><rect x="1054" y="720" width="1.2" height="7" fill="#454545"/><rect x="1072" y="720" width="1.2" height="7" fill="#454545"/><rect x="1075" y="720" width="1.2" height="7" fill="#454545"/><rect x="1078" y="720" width="1.2" height="7" fill="#454545"/><g fill="#e0e0e0"><rect x="1047.5" y="267" width="3" height="3"/><rect x="1047.5" y="272" width="3" height="3"/><rect x="1047.5" y="277" width="3" height="3"/><rect x="1052" y="268" width="8" height="1.6"/><rect x="1052" y="273" width="8" height="1.6"/><rect x="1052" y="278" width="8" height="1.6"/></g><path d="M1081 271 C1076 276 1070 281 1066 285 L1063.5 283 C1068 279 1074 274 1081 269 Z" fill="#e0e0e0"/><path d="M1063 283 C1058 283 1054 288 1053.5 295.5 C1060 295 1065 291 1066 286 Z" fill="#e0e0e0"/><path d="M1044 321 C1048 316 1055 315 1060 318 C1061 320 1061 323 1060 325 C1055 328 1048 326 1044 321 Z" fill="#e0e0e0"/><rect x="1062" y="320" width="18" height="3" fill="#e0e0e0"/><rect x="1048" y="336" width="19" height="3" fill="#e0e0e0"/><path d="M1069 337.5 L1076 330 L1083 337.5 L1076 345 Z" fill="#e0e0e0"/><path d="M1057 386 L1066 401 L1048 401 Z" fill="#e0e0e0"/><circle cx="1067" cy="401" r="8.5" fill="none" stroke="#e0e0e0" stroke-width="2"/><g fill="#e0e0e0"><rect x="1048" y="457" width="3" height="3"/><rect x="1048" y="462" width="3" height="3"/><rect x="1048" y="467" width="3" height="3"/><rect x="1053" y="458" width="6" height="1.6"/><rect x="1053" y="463" width="6" height="1.6"/><rect x="1053" y="468" width="6" height="1.6"/></g><circle cx="1070" cy="464" r="6" fill="#e0e0e0"/><rect x="1067.5" y="468" width="5" height="8" fill="#e0e0e0"/><rect x="1056" y="475.5" width="26" height="7" rx="1.5" fill="#e0e0e0"/><rect x="1056" y="485" width="26" height="2.4" fill="#e0e0e0"/><path d="M1049 532 C1051 536 1056 537 1059 535 L1066 542" fill="none" stroke="#e0e0e0" stroke-width="3.5"/><path d="M1055 529 C1052 530 1050 533 1052 536" fill="none" stroke="#e0e0e0" stroke-width="2"/><line x1="1078" y1="532" x2="1064" y2="546" stroke="#e0e0e0" stroke-width="2"/><line x1="1064" y1="546" x2="1052" y2="557" stroke="#e0e0e0" stroke-width="5" stroke-linecap="round"/><circle cx="1074" cy="551" r="3.2" fill="none" stroke="#e0e0e0" stroke-width="1.8"/><line x1="1068" y1="545" x2="1071.5" y2="548.5" stroke="#e0e0e0" stroke-width="1.8"/><path d="M1065 598 L1079 605 L1079 620 L1065 627 L1051 620 L1051 605 Z" fill="#6a6a6a" stroke="#e0e0e0" stroke-width="2" stroke-linejoin="round"/><path d="M1051 605 L1065 612 L1079 605 M1065 612 V627" fill="none" stroke="#e0e0e0" stroke-width="1.6"/><path d="M1051 605 L1065 598 L1079 605 L1065 612 Z" fill="#7a7a7a" stroke="#e0e0e0" stroke-width="1.6"/><circle cx="1063" cy="685.2" r="11.5" fill="#4a4a4a" stroke="#e0e0e0" stroke-width="2.2"/><path d="M1071.1 677.1 A11.5 11.5 0 0 1 1054.9 693.3 Z" fill="#e0e0e0"/><rect x="1049.5" y="742.5" width="32" height="22.5" fill="#e0e0e0"/><g fill="#444"><rect x="1053" y="746" width="3" height="3"/><rect x="1053" y="752" width="7" height="3"/><rect x="1053" y="758" width="3" height="3"/><rect x="1059" y="746" width="3" height="3"/><rect x="1065" y="748" width="2.5" height="12"/><rect x="1059" y="758" width="3" height="3"/><rect x="1071" y="746" width="3" height="3"/><rect x="1070" y="752" width="7" height="3"/><rect x="1071" y="758" width="3" height="3"/><rect x="1077" y="746" width="3" height="3"/><rect x="1077" y="758" width="3" height="3"/></g><path d="M1008.5 1064.5 L1015.5 1069.5 L1022.5 1064.5" fill="none" stroke="#8a8a8a" stroke-width="1.6"/></svg><div class="a" style="left:1050px;top:145px;font-size:30px;color:#e0e0e0;line-height:1">A</div><div class="a" style="left:1072px;top:148px;width:1.5px;height:28px;background:#d8d8d8"></div><!--/PAN-->




<!--FRAME--><svg style="left:0;top:0" width="1080" height="1080"><ellipse cx="427.8" cy="534.2" rx="130.2" ry="132" fill="none" stroke="#2b2139" stroke-width="5"/><g>
<path d="M389.5 368 C388 362 392 357 398.5 357 C406 357 413 363 418 370 C422 376 425 384 425.5 391" fill="none" stroke="#2b2139" stroke-width="5"/>
<circle cx="390.5" cy="367.5" r="3.2" fill="#2b2139"/>
<path d="M397 361.5 C402 359.5 408 361.5 411 367 C406 369.5 400 369 397 366.5 Z" fill="#2b2139"/>
<path d="M396 370 C403 368 410 371.5 414 380 C408 382.5 401 382.5 396 379 C399.5 376.5 399.5 373 396 370 Z" fill="#2b2139"/><path d="M410 372 L416 380 L412 384 Z" fill="#2b2139"/>
<path d="M418.5 367.5 C423.5 371 427 378 426.5 385 C426 389 424.5 391.5 422 393" fill="none" stroke="#2b2139" stroke-width="3.4"/>
<ellipse cx="420" cy="381" rx="2.4" ry="3.6" fill="#2b2139"/>
<path d="M426 392 C420 395.5 412 395.5 405 394 C396 392 384 390.5 368 390.5 C372 386 377 382.5 384 382 C394 381.5 404 384 411 387 C417 389 421 390.5 426 392 Z" fill="#2b2139"/>
<path d="M369 389 C364 392 361 398 359.5 404 C358 410 356.5 415 352 421 C347 426 340 430 325 429" fill="none" stroke="#2b2139" stroke-width="2.4"/>
<path d="M358.6 409 C355 404 347 402.5 340.3 405.6 C334 408.5 331.5 415 332.5 419.5 C333.5 423 338 425.5 342.3 425" fill="none" stroke="#2b2139" stroke-width="4.6"/>
<path d="M338.5 408 L344 406.5 L350.5 410 L347 416 L342.5 413 L339.5 416 Z" fill="#2b2139"/>
<path d="M358.6 409 C362 412 370 413 378 410.7 C384 409 388 407 391 404.5" fill="none" stroke="#2b2139" stroke-width="2.2"/>
<path d="M373 390.5 C379 392 385 397.5 389 405 C384 404.5 378.5 401.5 375.5 397.5 C374 395.5 373.5 393 373 390.5 Z" fill="#2b2139"/>
<circle cx="390.2" cy="397" r="3.4" fill="none" stroke="#2b2139" stroke-width="2.4"/>
<path d="M305 411.5 C309 410.5 311.5 414 310.6 418 C309.5 421 305 421.5 303 418.5 C302 415.5 302.5 412.5 305 411.5 Z" fill="#2b2139"/>
<path d="M312.4 426.5 C311 423 311.5 419 315 417 C318 415.5 320.5 417.5 320 420.5 C319.5 423 316.5 423.5 316 421.5" fill="none" stroke="#2b2139" stroke-width="2.4"/>
<path d="M325 429 C319 428.5 315 427 312 426" fill="none" stroke="#2b2139" stroke-width="2.4"/>
<path d="M314 426 C308 421 302 417.5 296 417.5 C293.5 414.5 288.5 414.5 286 417.5 C283 417.5 279.5 419.5 278.5 423 C275.5 422.5 272.5 425 272.5 429 C269.5 431 268.5 434.5 269.5 437.5 C267.5 440.5 266.5 444.5 266 449 C275 447.5 283 443.5 290 438.5 C296 434.5 302 433.5 309 433 Z" fill="#2b2139"/>

<path d="M307 430.5 C295 433.5 285 440 277.5 454" fill="none" stroke="#feebcf" stroke-width="1.1"/>
<path d="M306 433 C294 438 282 448 274 464" fill="none" stroke="#2b2139" stroke-width="3.2"/>
<path d="M308 427 C300 437 293 449 291 462 C289.5 475 293 487 301 497 L307.5 492 C303.5 482 302 470 302.5 460 C303 449 308 440 315 432 Z" fill="#2b2139"/>
<path d="M301.5 449 C298.5 461 299 476 303 489" fill="none" stroke="#feebcf" stroke-width="0.9"/>
<path d="M295 449 C289 449.5 284 453 282 458.5 C288 458.5 292 457.5 295 455 Z" fill="#2b2139"/><path d="M293.5 457 C288.5 459.5 285 464 284 470 C289 468 292 466 294 463 Z" fill="#2b2139"/><path d="M293 466 C289 468.5 287 472 286.5 477 C290 475 292.5 473 293.5 470 Z" fill="#2b2139"/>

<path d="M301.3 444 C303.5 451 310 453 315.2 445.5" fill="none" stroke="#2b2139" stroke-width="3.2"/>
<path d="M304 448 C308 454 308.5 461 306 468 C303.5 462 302.5 455 304 448 Z" fill="#2b2139"/>
<circle cx="270.7" cy="474" r="6.5" fill="none" stroke="#2b2139" stroke-width="4.6"/>
<circle cx="262.5" cy="469" r="4.5" fill="#2b2139"/><circle cx="267" cy="483.5" r="4.3" fill="#2b2139"/><circle cx="280" cy="478.5" r="3.8" fill="#2b2139"/>
<path d="M257.5 490 C262 487.5 268 488 272.4 492.5 C268 495.5 262 494.5 257.5 490 Z" fill="#2b2139"/>
<path d="M266 493.5 C270 498 276 501 283 500 C288 499.5 292 497.5 296 495" fill="none" stroke="#2b2139" stroke-width="2.2"/>
<path d="M277 497.5 C279.5 494 283 493 286.7 493.5 C285 497 281.5 498.5 277 497.5 Z" fill="#2b2139"/>
<path d="M286.7 503 C290 503.5 293 506 295 511.5 C291 511.5 288 509 286.7 503 Z" fill="#2b2139"/>
<path d="M277.6 501.4 C279 506 282.5 510 288 512.4 C292 515 293 521 290.5 527.5 C288.5 531 283.5 531.5 279.5 529 C275 526 273.5 521 276 518.5 C278.5 516.5 281.5 518.5 281 521.5" fill="none" stroke="#2b2139" stroke-width="2.8"/>
<path d="M270.5 515.5 C274.5 514 278 516.5 277.5 521 C276.5 524 272.5 524 270.8 521 Z" fill="#2b2139"/>
<path d="M246.5 534.2 L255 531.2 L263 534.2 Z" fill="#2b2139"/>
<path d="M265 534.5 C263 531.5 258.5 531 256.5 528 C254.5 524.5 257.5 521 261.5 521 C265.5 521 267.5 524.5 266.3 527.5 C265.5 529.5 263 530 262 528.5" fill="none" stroke="#2b2139" stroke-width="2.7"/>
<path d="M259.5 535 L268 532.5 L268 535 Z" fill="#2b2139"/>
<path d="M268.5 527.5 C270.5 530 271.5 532.5 271.5 534.2 L267.5 534.2 C267.5 532 267.8 529.5 268.5 527.5 Z" fill="#2b2139"/>
<path d="M290.5 534.2 C292 531.5 293 530 294.4 529 C295.8 530 296.8 531.5 298.3 534.2 Z" fill="#2b2139"/>
</g><g transform="translate(855.6,0) scale(-1,1)">
<path d="M389.5 368 C388 362 392 357 398.5 357 C406 357 413 363 418 370 C422 376 425 384 425.5 391" fill="none" stroke="#2b2139" stroke-width="5"/>
<circle cx="390.5" cy="367.5" r="3.2" fill="#2b2139"/>
<path d="M397 361.5 C402 359.5 408 361.5 411 367 C406 369.5 400 369 397 366.5 Z" fill="#2b2139"/>
<path d="M396 370 C403 368 410 371.5 414 380 C408 382.5 401 382.5 396 379 C399.5 376.5 399.5 373 396 370 Z" fill="#2b2139"/><path d="M410 372 L416 380 L412 384 Z" fill="#2b2139"/>
<path d="M418.5 367.5 C423.5 371 427 378 426.5 385 C426 389 424.5 391.5 422 393" fill="none" stroke="#2b2139" stroke-width="3.4"/>
<ellipse cx="420" cy="381" rx="2.4" ry="3.6" fill="#2b2139"/>
<path d="M426 392 C420 395.5 412 395.5 405 394 C396 392 384 390.5 368 390.5 C372 386 377 382.5 384 382 C394 381.5 404 384 411 387 C417 389 421 390.5 426 392 Z" fill="#2b2139"/>
<path d="M369 389 C364 392 361 398 359.5 404 C358 410 356.5 415 352 421 C347 426 340 430 325 429" fill="none" stroke="#2b2139" stroke-width="2.4"/>
<path d="M358.6 409 C355 404 347 402.5 340.3 405.6 C334 408.5 331.5 415 332.5 419.5 C333.5 423 338 425.5 342.3 425" fill="none" stroke="#2b2139" stroke-width="4.6"/>
<path d="M338.5 408 L344 406.5 L350.5 410 L347 416 L342.5 413 L339.5 416 Z" fill="#2b2139"/>
<path d="M358.6 409 C362 412 370 413 378 410.7 C384 409 388 407 391 404.5" fill="none" stroke="#2b2139" stroke-width="2.2"/>
<path d="M373 390.5 C379 392 385 397.5 389 405 C384 404.5 378.5 401.5 375.5 397.5 C374 395.5 373.5 393 373 390.5 Z" fill="#2b2139"/>
<circle cx="390.2" cy="397" r="3.4" fill="none" stroke="#2b2139" stroke-width="2.4"/>
<path d="M305 411.5 C309 410.5 311.5 414 310.6 418 C309.5 421 305 421.5 303 418.5 C302 415.5 302.5 412.5 305 411.5 Z" fill="#2b2139"/>
<path d="M312.4 426.5 C311 423 311.5 419 315 417 C318 415.5 320.5 417.5 320 420.5 C319.5 423 316.5 423.5 316 421.5" fill="none" stroke="#2b2139" stroke-width="2.4"/>
<path d="M325 429 C319 428.5 315 427 312 426" fill="none" stroke="#2b2139" stroke-width="2.4"/>
<path d="M314 426 C308 421 302 417.5 296 417.5 C293.5 414.5 288.5 414.5 286 417.5 C283 417.5 279.5 419.5 278.5 423 C275.5 422.5 272.5 425 272.5 429 C269.5 431 268.5 434.5 269.5 437.5 C267.5 440.5 266.5 444.5 266 449 C275 447.5 283 443.5 290 438.5 C296 434.5 302 433.5 309 433 Z" fill="#2b2139"/>

<path d="M307 430.5 C295 433.5 285 440 277.5 454" fill="none" stroke="#feebcf" stroke-width="1.1"/>
<path d="M306 433 C294 438 282 448 274 464" fill="none" stroke="#2b2139" stroke-width="3.2"/>
<path d="M308 427 C300 437 293 449 291 462 C289.5 475 293 487 301 497 L307.5 492 C303.5 482 302 470 302.5 460 C303 449 308 440 315 432 Z" fill="#2b2139"/>
<path d="M301.5 449 C298.5 461 299 476 303 489" fill="none" stroke="#feebcf" stroke-width="0.9"/>
<path d="M295 449 C289 449.5 284 453 282 458.5 C288 458.5 292 457.5 295 455 Z" fill="#2b2139"/><path d="M293.5 457 C288.5 459.5 285 464 284 470 C289 468 292 466 294 463 Z" fill="#2b2139"/><path d="M293 466 C289 468.5 287 472 286.5 477 C290 475 292.5 473 293.5 470 Z" fill="#2b2139"/>

<path d="M301.3 444 C303.5 451 310 453 315.2 445.5" fill="none" stroke="#2b2139" stroke-width="3.2"/>
<path d="M304 448 C308 454 308.5 461 306 468 C303.5 462 302.5 455 304 448 Z" fill="#2b2139"/>
<circle cx="270.7" cy="474" r="6.5" fill="none" stroke="#2b2139" stroke-width="4.6"/>
<circle cx="262.5" cy="469" r="4.5" fill="#2b2139"/><circle cx="267" cy="483.5" r="4.3" fill="#2b2139"/><circle cx="280" cy="478.5" r="3.8" fill="#2b2139"/>
<path d="M257.5 490 C262 487.5 268 488 272.4 492.5 C268 495.5 262 494.5 257.5 490 Z" fill="#2b2139"/>
<path d="M266 493.5 C270 498 276 501 283 500 C288 499.5 292 497.5 296 495" fill="none" stroke="#2b2139" stroke-width="2.2"/>
<path d="M277 497.5 C279.5 494 283 493 286.7 493.5 C285 497 281.5 498.5 277 497.5 Z" fill="#2b2139"/>
<path d="M286.7 503 C290 503.5 293 506 295 511.5 C291 511.5 288 509 286.7 503 Z" fill="#2b2139"/>
<path d="M277.6 501.4 C279 506 282.5 510 288 512.4 C292 515 293 521 290.5 527.5 C288.5 531 283.5 531.5 279.5 529 C275 526 273.5 521 276 518.5 C278.5 516.5 281.5 518.5 281 521.5" fill="none" stroke="#2b2139" stroke-width="2.8"/>
<path d="M270.5 515.5 C274.5 514 278 516.5 277.5 521 C276.5 524 272.5 524 270.8 521 Z" fill="#2b2139"/>
<path d="M246.5 534.2 L255 531.2 L263 534.2 Z" fill="#2b2139"/>
<path d="M265 534.5 C263 531.5 258.5 531 256.5 528 C254.5 524.5 257.5 521 261.5 521 C265.5 521 267.5 524.5 266.3 527.5 C265.5 529.5 263 530 262 528.5" fill="none" stroke="#2b2139" stroke-width="2.7"/>
<path d="M259.5 535 L268 532.5 L268 535 Z" fill="#2b2139"/>
<path d="M268.5 527.5 C270.5 530 271.5 532.5 271.5 534.2 L267.5 534.2 C267.5 532 267.8 529.5 268.5 527.5 Z" fill="#2b2139"/>
<path d="M290.5 534.2 C292 531.5 293 530 294.4 529 C295.8 530 296.8 531.5 298.3 534.2 Z" fill="#2b2139"/>
</g><g transform="translate(0,1068.4) scale(1,-1)">
<path d="M389.5 368 C388 362 392 357 398.5 357 C406 357 413 363 418 370 C422 376 425 384 425.5 391" fill="none" stroke="#2b2139" stroke-width="5"/>
<circle cx="390.5" cy="367.5" r="3.2" fill="#2b2139"/>
<path d="M397 361.5 C402 359.5 408 361.5 411 367 C406 369.5 400 369 397 366.5 Z" fill="#2b2139"/>
<path d="M396 370 C403 368 410 371.5 414 380 C408 382.5 401 382.5 396 379 C399.5 376.5 399.5 373 396 370 Z" fill="#2b2139"/><path d="M410 372 L416 380 L412 384 Z" fill="#2b2139"/>
<path d="M418.5 367.5 C423.5 371 427 378 426.5 385 C426 389 424.5 391.5 422 393" fill="none" stroke="#2b2139" stroke-width="3.4"/>
<ellipse cx="420" cy="381" rx="2.4" ry="3.6" fill="#2b2139"/>
<path d="M426 392 C420 395.5 412 395.5 405 394 C396 392 384 390.5 368 390.5 C372 386 377 382.5 384 382 C394 381.5 404 384 411 387 C417 389 421 390.5 426 392 Z" fill="#2b2139"/>
<path d="M369 389 C364 392 361 398 359.5 404 C358 410 356.5 415 352 421 C347 426 340 430 325 429" fill="none" stroke="#2b2139" stroke-width="2.4"/>
<path d="M358.6 409 C355 404 347 402.5 340.3 405.6 C334 408.5 331.5 415 332.5 419.5 C333.5 423 338 425.5 342.3 425" fill="none" stroke="#2b2139" stroke-width="4.6"/>
<path d="M338.5 408 L344 406.5 L350.5 410 L347 416 L342.5 413 L339.5 416 Z" fill="#2b2139"/>
<path d="M358.6 409 C362 412 370 413 378 410.7 C384 409 388 407 391 404.5" fill="none" stroke="#2b2139" stroke-width="2.2"/>
<path d="M373 390.5 C379 392 385 397.5 389 405 C384 404.5 378.5 401.5 375.5 397.5 C374 395.5 373.5 393 373 390.5 Z" fill="#2b2139"/>
<circle cx="390.2" cy="397" r="3.4" fill="none" stroke="#2b2139" stroke-width="2.4"/>
<path d="M305 411.5 C309 410.5 311.5 414 310.6 418 C309.5 421 305 421.5 303 418.5 C302 415.5 302.5 412.5 305 411.5 Z" fill="#2b2139"/>
<path d="M312.4 426.5 C311 423 311.5 419 315 417 C318 415.5 320.5 417.5 320 420.5 C319.5 423 316.5 423.5 316 421.5" fill="none" stroke="#2b2139" stroke-width="2.4"/>
<path d="M325 429 C319 428.5 315 427 312 426" fill="none" stroke="#2b2139" stroke-width="2.4"/>
<path d="M314 426 C308 421 302 417.5 296 417.5 C293.5 414.5 288.5 414.5 286 417.5 C283 417.5 279.5 419.5 278.5 423 C275.5 422.5 272.5 425 272.5 429 C269.5 431 268.5 434.5 269.5 437.5 C267.5 440.5 266.5 444.5 266 449 C275 447.5 283 443.5 290 438.5 C296 434.5 302 433.5 309 433 Z" fill="#2b2139"/>

<path d="M307 430.5 C295 433.5 285 440 277.5 454" fill="none" stroke="#feebcf" stroke-width="1.1"/>
<path d="M306 433 C294 438 282 448 274 464" fill="none" stroke="#2b2139" stroke-width="3.2"/>
<path d="M308 427 C300 437 293 449 291 462 C289.5 475 293 487 301 497 L307.5 492 C303.5 482 302 470 302.5 460 C303 449 308 440 315 432 Z" fill="#2b2139"/>
<path d="M301.5 449 C298.5 461 299 476 303 489" fill="none" stroke="#feebcf" stroke-width="0.9"/>
<path d="M295 449 C289 449.5 284 453 282 458.5 C288 458.5 292 457.5 295 455 Z" fill="#2b2139"/><path d="M293.5 457 C288.5 459.5 285 464 284 470 C289 468 292 466 294 463 Z" fill="#2b2139"/><path d="M293 466 C289 468.5 287 472 286.5 477 C290 475 292.5 473 293.5 470 Z" fill="#2b2139"/>

<path d="M301.3 444 C303.5 451 310 453 315.2 445.5" fill="none" stroke="#2b2139" stroke-width="3.2"/>
<path d="M304 448 C308 454 308.5 461 306 468 C303.5 462 302.5 455 304 448 Z" fill="#2b2139"/>
<circle cx="270.7" cy="474" r="6.5" fill="none" stroke="#2b2139" stroke-width="4.6"/>
<circle cx="262.5" cy="469" r="4.5" fill="#2b2139"/><circle cx="267" cy="483.5" r="4.3" fill="#2b2139"/><circle cx="280" cy="478.5" r="3.8" fill="#2b2139"/>
<path d="M257.5 490 C262 487.5 268 488 272.4 492.5 C268 495.5 262 494.5 257.5 490 Z" fill="#2b2139"/>
<path d="M266 493.5 C270 498 276 501 283 500 C288 499.5 292 497.5 296 495" fill="none" stroke="#2b2139" stroke-width="2.2"/>
<path d="M277 497.5 C279.5 494 283 493 286.7 493.5 C285 497 281.5 498.5 277 497.5 Z" fill="#2b2139"/>
<path d="M286.7 503 C290 503.5 293 506 295 511.5 C291 511.5 288 509 286.7 503 Z" fill="#2b2139"/>
<path d="M277.6 501.4 C279 506 282.5 510 288 512.4 C292 515 293 521 290.5 527.5 C288.5 531 283.5 531.5 279.5 529 C275 526 273.5 521 276 518.5 C278.5 516.5 281.5 518.5 281 521.5" fill="none" stroke="#2b2139" stroke-width="2.8"/>
<path d="M270.5 515.5 C274.5 514 278 516.5 277.5 521 C276.5 524 272.5 524 270.8 521 Z" fill="#2b2139"/>
<path d="M246.5 534.2 L255 531.2 L263 534.2 Z" fill="#2b2139"/>
<path d="M265 534.5 C263 531.5 258.5 531 256.5 528 C254.5 524.5 257.5 521 261.5 521 C265.5 521 267.5 524.5 266.3 527.5 C265.5 529.5 263 530 262 528.5" fill="none" stroke="#2b2139" stroke-width="2.7"/>
<path d="M259.5 535 L268 532.5 L268 535 Z" fill="#2b2139"/>
<path d="M268.5 527.5 C270.5 530 271.5 532.5 271.5 534.2 L267.5 534.2 C267.5 532 267.8 529.5 268.5 527.5 Z" fill="#2b2139"/>
<path d="M290.5 534.2 C292 531.5 293 530 294.4 529 C295.8 530 296.8 531.5 298.3 534.2 Z" fill="#2b2139"/>
</g><g transform="translate(855.6,1068.4) scale(-1,-1)">
<path d="M389.5 368 C388 362 392 357 398.5 357 C406 357 413 363 418 370 C422 376 425 384 425.5 391" fill="none" stroke="#2b2139" stroke-width="5"/>
<circle cx="390.5" cy="367.5" r="3.2" fill="#2b2139"/>
<path d="M397 361.5 C402 359.5 408 361.5 411 367 C406 369.5 400 369 397 366.5 Z" fill="#2b2139"/>
<path d="M396 370 C403 368 410 371.5 414 380 C408 382.5 401 382.5 396 379 C399.5 376.5 399.5 373 396 370 Z" fill="#2b2139"/><path d="M410 372 L416 380 L412 384 Z" fill="#2b2139"/>
<path d="M418.5 367.5 C423.5 371 427 378 426.5 385 C426 389 424.5 391.5 422 393" fill="none" stroke="#2b2139" stroke-width="3.4"/>
<ellipse cx="420" cy="381" rx="2.4" ry="3.6" fill="#2b2139"/>
<path d="M426 392 C420 395.5 412 395.5 405 394 C396 392 384 390.5 368 390.5 C372 386 377 382.5 384 382 C394 381.5 404 384 411 387 C417 389 421 390.5 426 392 Z" fill="#2b2139"/>
<path d="M369 389 C364 392 361 398 359.5 404 C358 410 356.5 415 352 421 C347 426 340 430 325 429" fill="none" stroke="#2b2139" stroke-width="2.4"/>
<path d="M358.6 409 C355 404 347 402.5 340.3 405.6 C334 408.5 331.5 415 332.5 419.5 C333.5 423 338 425.5 342.3 425" fill="none" stroke="#2b2139" stroke-width="4.6"/>
<path d="M338.5 408 L344 406.5 L350.5 410 L347 416 L342.5 413 L339.5 416 Z" fill="#2b2139"/>
<path d="M358.6 409 C362 412 370 413 378 410.7 C384 409 388 407 391 404.5" fill="none" stroke="#2b2139" stroke-width="2.2"/>
<path d="M373 390.5 C379 392 385 397.5 389 405 C384 404.5 378.5 401.5 375.5 397.5 C374 395.5 373.5 393 373 390.5 Z" fill="#2b2139"/>
<circle cx="390.2" cy="397" r="3.4" fill="none" stroke="#2b2139" stroke-width="2.4"/>
<path d="M305 411.5 C309 410.5 311.5 414 310.6 418 C309.5 421 305 421.5 303 418.5 C302 415.5 302.5 412.5 305 411.5 Z" fill="#2b2139"/>
<path d="M312.4 426.5 C311 423 311.5 419 315 417 C318 415.5 320.5 417.5 320 420.5 C319.5 423 316.5 423.5 316 421.5" fill="none" stroke="#2b2139" stroke-width="2.4"/>
<path d="M325 429 C319 428.5 315 427 312 426" fill="none" stroke="#2b2139" stroke-width="2.4"/>
<path d="M314 426 C308 421 302 417.5 296 417.5 C293.5 414.5 288.5 414.5 286 417.5 C283 417.5 279.5 419.5 278.5 423 C275.5 422.5 272.5 425 272.5 429 C269.5 431 268.5 434.5 269.5 437.5 C267.5 440.5 266.5 444.5 266 449 C275 447.5 283 443.5 290 438.5 C296 434.5 302 433.5 309 433 Z" fill="#2b2139"/>

<path d="M307 430.5 C295 433.5 285 440 277.5 454" fill="none" stroke="#feebcf" stroke-width="1.1"/>
<path d="M306 433 C294 438 282 448 274 464" fill="none" stroke="#2b2139" stroke-width="3.2"/>
<path d="M308 427 C300 437 293 449 291 462 C289.5 475 293 487 301 497 L307.5 492 C303.5 482 302 470 302.5 460 C303 449 308 440 315 432 Z" fill="#2b2139"/>
<path d="M301.5 449 C298.5 461 299 476 303 489" fill="none" stroke="#feebcf" stroke-width="0.9"/>
<path d="M295 449 C289 449.5 284 453 282 458.5 C288 458.5 292 457.5 295 455 Z" fill="#2b2139"/><path d="M293.5 457 C288.5 459.5 285 464 284 470 C289 468 292 466 294 463 Z" fill="#2b2139"/><path d="M293 466 C289 468.5 287 472 286.5 477 C290 475 292.5 473 293.5 470 Z" fill="#2b2139"/>

<path d="M301.3 444 C303.5 451 310 453 315.2 445.5" fill="none" stroke="#2b2139" stroke-width="3.2"/>
<path d="M304 448 C308 454 308.5 461 306 468 C303.5 462 302.5 455 304 448 Z" fill="#2b2139"/>
<circle cx="270.7" cy="474" r="6.5" fill="none" stroke="#2b2139" stroke-width="4.6"/>
<circle cx="262.5" cy="469" r="4.5" fill="#2b2139"/><circle cx="267" cy="483.5" r="4.3" fill="#2b2139"/><circle cx="280" cy="478.5" r="3.8" fill="#2b2139"/>
<path d="M257.5 490 C262 487.5 268 488 272.4 492.5 C268 495.5 262 494.5 257.5 490 Z" fill="#2b2139"/>
<path d="M266 493.5 C270 498 276 501 283 500 C288 499.5 292 497.5 296 495" fill="none" stroke="#2b2139" stroke-width="2.2"/>
<path d="M277 497.5 C279.5 494 283 493 286.7 493.5 C285 497 281.5 498.5 277 497.5 Z" fill="#2b2139"/>
<path d="M286.7 503 C290 503.5 293 506 295 511.5 C291 511.5 288 509 286.7 503 Z" fill="#2b2139"/>
<path d="M277.6 501.4 C279 506 282.5 510 288 512.4 C292 515 293 521 290.5 527.5 C288.5 531 283.5 531.5 279.5 529 C275 526 273.5 521 276 518.5 C278.5 516.5 281.5 518.5 281 521.5" fill="none" stroke="#2b2139" stroke-width="2.8"/>
<path d="M270.5 515.5 C274.5 514 278 516.5 277.5 521 C276.5 524 272.5 524 270.8 521 Z" fill="#2b2139"/>
<path d="M246.5 534.2 L255 531.2 L263 534.2 Z" fill="#2b2139"/>
<path d="M265 534.5 C263 531.5 258.5 531 256.5 528 C254.5 524.5 257.5 521 261.5 521 C265.5 521 267.5 524.5 266.3 527.5 C265.5 529.5 263 530 262 528.5" fill="none" stroke="#2b2139" stroke-width="2.7"/>
<path d="M259.5 535 L268 532.5 L268 535 Z" fill="#2b2139"/>
<path d="M268.5 527.5 C270.5 530 271.5 532.5 271.5 534.2 L267.5 534.2 C267.5 532 267.8 529.5 268.5 527.5 Z" fill="#2b2139"/>
<path d="M290.5 534.2 C292 531.5 293 530 294.4 529 C295.8 530 296.8 531.5 298.3 534.2 Z" fill="#2b2139"/>
</g><ellipse cx="427.8" cy="402.20000000000005" rx="4.6" ry="4.5" fill="#2b2139"/><ellipse cx="427.8" cy="666.2" rx="4.6" ry="4.5" fill="#2b2139"/></svg><!--/FRAME-->
<!--NAMES--><svg style="left:0;top:0" width="1080" height="1080"><path d="M357 456.5 V492" fill="none" stroke="#35292c" stroke-width="2.5" stroke-linecap="round"/><path d="M357 456.5 H371 C378 456.5 380.6 461 380.6 465 C380.6 470 377 474 370 474 H357" fill="none" stroke="#35292c" stroke-width="1.5" stroke-linecap="round"/><path d="M361.5 474.5 C366 478 369 484 373 488 C376 491 379 492 382 492" fill="none" stroke="#35292c" stroke-width="1.5" stroke-linecap="round"/><path d="M386 474.5 C388 469 393 466.5 399 466.5 C405 466.5 409 469 409 474 V491.5" fill="none" stroke="#35292c" stroke-width="1.9" stroke-linecap="round"/><path d="M409.5 472 C402 475 395 477 390 480 C386 483 385.5 488 389 491 C393 493 401 492.5 409 489" fill="none" stroke="#35292c" stroke-width="1.5" stroke-linecap="round"/><path d="M417 456 V492" fill="none" stroke="#35292c" stroke-width="2.5" stroke-linecap="round"/><path d="M417.5 472 C420 467 425 465.5 429 465.5 C435 465.5 439 471 439 479 C439 487 435 492.4 428 492.4 C423 492.4 419 490 417.5 487" fill="none" stroke="#35292c" stroke-width="1.5" stroke-linecap="round"/><path d="M443.5 474.5 C445.5 469 450 466.5 455.5 466.5 C462 466.5 466.5 469 466.5 474 V491.5" fill="none" stroke="#35292c" stroke-width="1.9" stroke-linecap="round"/><path d="M467 472 C459.5 475 452 477 447.5 480 C443.5 483 443 488 446.5 491 C450.5 493 458.5 492.5 466.5 489" fill="none" stroke="#35292c" stroke-width="1.5" stroke-linecap="round"/><path d="M467 483 C470 478 472.5 474 475.4 470" fill="none" stroke="#35292c" stroke-width="1.5" stroke-linecap="round"/><path d="M475.4 456 V492.4" fill="none" stroke="#35292c" stroke-width="2.5" stroke-linecap="round"/><path d="M476 471 C479 467 483 465.8 487 465.8 C494 465.8 498.3 469 498.3 476 V492" fill="none" stroke="#35292c" stroke-width="1.5" stroke-linecap="round"/><path d="M439.7 526.9 C438 533 434 541 428 545.5 C424 548.3 418 548.3 414 545.5 C410.5 542.5 410.5 537 413.5 534 C415 532 417 531 419 530" fill="none" stroke="#35292c" stroke-width="1.6" stroke-linecap="round"/><path d="M419.5 525.5 C417 521 417.5 516 420.5 514 C424 511.5 430 512.5 430.2 516.5 C430.5 520 427 524.5 423 527.5" fill="none" stroke="#35292c" stroke-width="1.4" stroke-linecap="round"/><path d="M419.5 525.5 C423 532 428 539 433 543.5 C436 546.5 440 548.5 444 545" fill="none" stroke="#35292c" stroke-width="2.0" stroke-linecap="round"/><circle cx="440" cy="527" r="1.3" fill="#35292c"/><path d="M369.7 571.8 V607.2" fill="none" stroke="#35292c" stroke-width="2.7" stroke-linecap="round"/><path d="M369.7 607.2 H392.4" fill="none" stroke="#35292c" stroke-width="1.4" stroke-linecap="round"/><path d="M394.3 583 V597 C394.3 604 399 607.4 405 607.4 C411 607.4 416.6 603 416.6 597" fill="none" stroke="#35292c" stroke-width="1.7" stroke-linecap="round"/><path d="M417 582.5 V610 C417 617 412 622 406 622" fill="none" stroke="#35292c" stroke-width="2.3" stroke-linecap="round"/><path d="M446 588 C443 583.5 438.5 581.2 434 581.2 C427 581.2 422.6 587 422.6 594.5 C422.6 602 427 607.6 434 607.6 C439 607.6 443.5 605 446 600" fill="none" stroke="#35292c" stroke-width="1.6" stroke-linecap="round"/><path d="M446 571.5 V607.8" fill="none" stroke="#35292c" stroke-width="2.6" stroke-linecap="round"/><path d="M454.3 583 V607.8" fill="none" stroke="#35292c" stroke-width="2.4" stroke-linecap="round"/><circle cx="454.3" cy="577.6" r="1.5" fill="#35292c"/><path d="M462.3 589 C464 584 468 581.2 473.5 581.2 C480 581.2 484.8 584 484.8 591 V607" fill="none" stroke="#35292c" stroke-width="1.8" stroke-linecap="round"/><path d="M484.5 590.5 C477 592.5 469 594 465 597 C461.5 600 462 605 466 607 C471 609 478 607 484.5 604" fill="none" stroke="#35292c" stroke-width="1.5" stroke-linecap="round"/></svg><!--/NAMES-->
</body></html>
